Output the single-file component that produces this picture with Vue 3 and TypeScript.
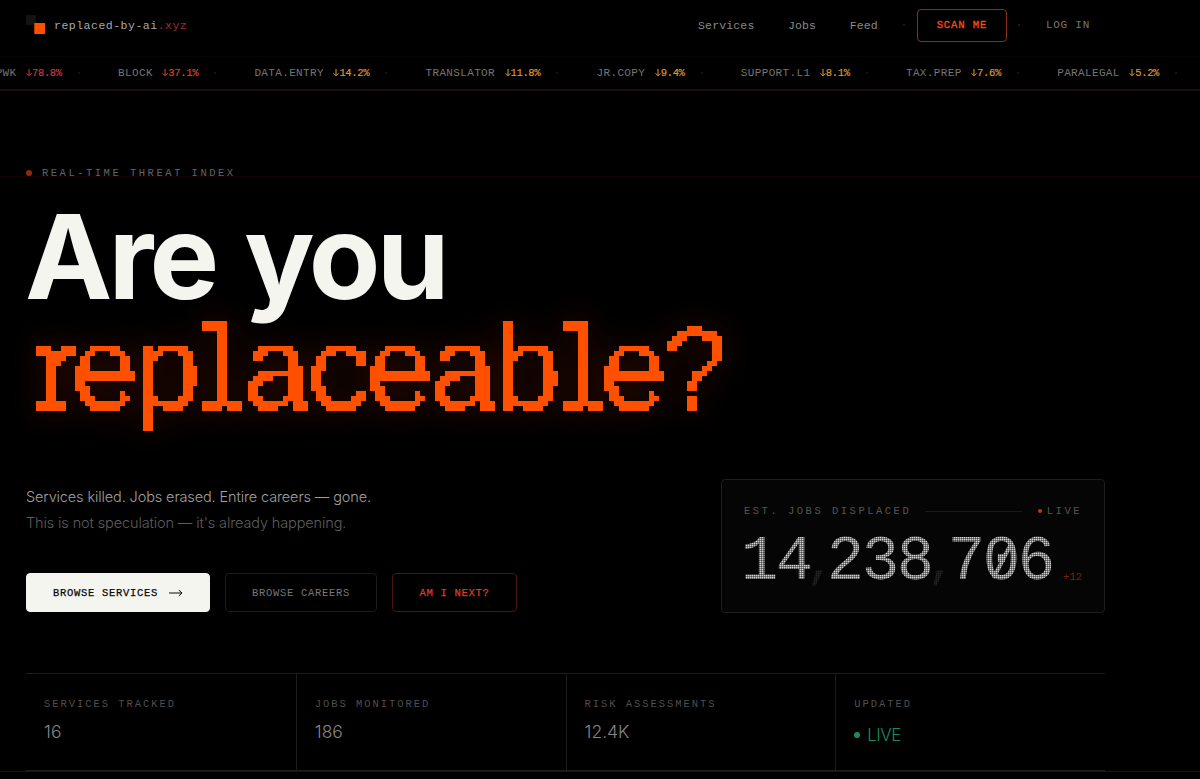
<script setup lang="ts">
interface Tick { name: string; drop: string; tone: string }
interface Stat { label: string; value: string; live?: boolean }

const ticks: Tick[] = [
  { name: 'UPWK', drop: '78.8%', tone: 'red' },
  { name: 'BLOCK', drop: '37.1%', tone: 'orange' },
  { name: 'DATA.ENTRY', drop: '14.2%', tone: 'amber' },
  { name: 'TRANSLATOR', drop: '11.8%', tone: 'amber' },
  { name: 'JR.COPY', drop: '9.4%', tone: 'amber' },
  { name: 'SUPPORT.L1', drop: '8.1%', tone: 'amber' },
  { name: 'TAX.PREP', drop: '7.6%', tone: 'amber' },
  { name: 'PARALEGAL', drop: '5.2%', tone: 'amber' },
]

const stats: Stat[] = [
  { label: 'SERVICES TRACKED', value: '16' },
  { label: 'JOBS MONITORED', value: '186' },
  { label: 'RISK ASSESSMENTS', value: '12.4K' },
  { label: 'UPDATED', value: 'LIVE', live: true },
]

const kerning = [0, 0, 4, -5, -3, 4, 0, 6, 4, -4, -8, 4]
const letters = 'replaceable?'.split('').map((c, i) => ({ c, kern: kerning[i] + 'px' }))
const digits = '14,238,706'.split('')
const kind = (d: string) => (d === ',' ? 'comma' : d === '0' ? 'zero' : 'num')
</script>

<template>
  <div class="page">
    <svg class="defs" width="0" height="0" aria-hidden="true">
      <filter id="pixelate" filterUnits="userSpaceOnUse" x="-20" y="0" width="100" height="150" color-interpolation-filters="sRGB">
        <feFlood x="2" y="2" width="1" height="1" flood-color="#000" result="dot" />
        <feOffset in="dot" dx="0" dy="0" x="0" y="0" width="5" height="5" result="cell" />
        <feTile in="cell" x="-20" y="0" width="100" height="150" result="grid" />
        <feComposite in="SourceGraphic" in2="grid" operator="in" result="samples" />
        <feComponentTransfer in="samples" result="hard">
          <feFuncA type="discrete" tableValues="0 1" />
        </feComponentTransfer>
        <feMorphology in="hard" operator="dilate" radius="2" />
      </filter>
    </svg>

    <header class="nav">
      <div class="brand">
        <svg class="logo" viewBox="0 0 20 20" width="20" height="20"><rect x="0" y="0" width="10" height="10" fill="#111412" /><rect x="8.3" y="8" width="10.7" height="11" fill="#ff5000" /></svg>
        <span>replaced-by-ai<i>.xyz</i></span>
      </div>
      <nav class="links">
        <a class="link">Services</a><a class="link">Jobs</a><a class="link">Feed</a>
        <b class="sep"></b>
        <button class="scan">SCAN ME</button>
        <b class="sep after"></b>
        <a class="login">LOG IN</a>
      </nav>
    </header>

    <div class="ticker">
      <div v-for="t in ticks" :key="t.name" class="tick">
        <span class="tname">{{ t.name }}</span>
        <span class="drop" :class="t.tone"><svg viewBox="0 0 6 8" width="6" height="8"><path d="M3 0v6.6M.5 4.3 3 6.8l2.5-2.5" fill="none" stroke="currentColor" /></svg>{{ t.drop }}</span>
        <b class="tdot"></b>
      </div>
    </div>

    <main class="hero">
      <p class="eyebrow"><b></b>REAL-TIME THREAT INDEX</p>
      <h1>
        <span class="are">Are you</span>
        <span class="glow"><span v-for="(l, i) in letters" :key="i" class="pixel" :class="{ r: l.c === 'r', l: l.c === 'l', p: l.c === 'p' }" :style="{ marginLeft: l.kern }">{{ l.c }}</span></span>
      </h1>
      <div class="row">
        <div class="left">
          <p class="lead">Services killed. Jobs erased. Entire careers — gone.</p>
          <p class="lead dim">This is not speculation — it's already happening.</p>
          <div class="actions">
            <button class="btn primary">BROWSE SERVICES<svg viewBox="0 0 14 8" width="14" height="8"><path d="M0 4h13M9.8 1 13 4 9.8 7" fill="none" stroke="currentColor" /></svg></button>
            <button class="btn ghost">BROWSE CAREERS</button>
            <button class="btn danger">AM I NEXT?</button>
          </div>
        </div>
        <aside class="card">
          <div class="chead"><span>EST. JOBS DISPLACED</span><hr><span class="clive"><b></b>LIVE</span></div>
          <div class="count">
            <div class="digits"><span v-for="(d, i) in digits" :key="i" :class="kind(d)">{{ d }}</span></div>
            <span class="plus">+12</span>
          </div>
        </aside>
      </div>
      <section class="stats">
        <div v-for="s in stats" :key="s.label" class="stat">
          <div class="slabel">{{ s.label }}</div>
          <div class="sval" :class="{ live: s.live }"><b v-if="s.live"></b>{{ s.value }}</div>
        </div>
      </section>
    </main>
    <div class="foot"></div>
    <div class="scan-line"></div>
  </div>
</template>

<style>
body { background: #000; overflow: hidden; }
</style>

<style scoped>
* { box-sizing: border-box; }
.page { position: relative; width: 1200px; height: 779px; overflow: hidden; background: #000; font-family: "Liberation Mono", monospace; color: #888; }
.defs { position: absolute; }
p, h1 { margin: 0; font-weight: 400; }
button { font-family: inherit; background: none; padding: 0; display: flex; align-items: center; justify-content: center; border-radius: 4px; }
.nav { height: 57px; padding: 0 110px 6px 26px; display: flex; align-items: center; justify-content: space-between; border-bottom: 1px solid #050505; }
.brand { display: flex; align-items: center; gap: 8px; font-size: 11.5px; letter-spacing: .5px; color: #a9a9a9; }
.brand i { font-style: normal; color: #a03020; }
.logo { display: block; }
.links { display: flex; align-items: center; font-size: 11.5px; letter-spacing: .15px; color: #888; }
.link { margin-right: 33.5px; }
.sep { width: 2px; height: 2px; background: #222; border-radius: 50%; margin: 0 12px 0 -8.5px; }
.sep.after { margin: 0 26px 0 11px; }
.scan { width: 90px; height: 33px; border: 1px solid #8a2f17; color: #ff4a14; font-size: 10.5px; letter-spacing: .9px; -webkit-text-stroke: .3px currentColor; }
.login { font-size: 11px; letter-spacing: .75px; color: #777; }
.ticker { height: 34px; display: flex; align-items: center; margin-left: -11.3px; width: 1240px; border-bottom: 2px solid #1a0f0b; }
.tick { display: flex; align-items: center; flex: none; height: 32px; font-size: 11px; color: #757575; }
.tname { letter-spacing: .35px; margin-right: 9.5px; }
.drop { display: flex; align-items: center; font-size: 10.5px; letter-spacing: -.35px; -webkit-text-stroke: .15px currentColor; }
.red { color: #d93445; } .orange { color: #dc4a20; } .amber { color: #e39a2a; }
.tdot { width: 2px; height: 2px; border-radius: 50%; background: #1c1c1c; margin: 0 38.3px 0 16px; }
.hero { padding: 74px 95px 0 26px; }
.eyebrow { height: 16px; display: flex; align-items: center; gap: 10px; font-size: 10.5px; letter-spacing: 2.5px; color: #636363; }
.eyebrow b { width: 6px; height: 6px; border-radius: 50%; background: #8e2a12; }
h1 { height: 298px; }
.are { display: block; height: 130px; margin-left: -1px; padding-top: 6px; line-height: 140px; font-family: Inter, sans-serif; font-weight: 700; font-size: 117px; letter-spacing: -3.8px; word-spacing: 5px; color: #f5f5f0; white-space: nowrap; }
.glow { display: flex; height: 150px; margin-left: -10px; filter: drop-shadow(0 0 16px rgba(255, 50, 0, .22)); }
.pixel { position: relative; display: flex; justify-content: center; flex: none; width: 59px; height: 150px; line-height: 134px; font-size: 122px; color: #ff5000; filter: url(#pixelate); }
.r { padding-left: 36px; clip-path: inset(0 -1px 0 0); }
.r::before, .r::after, .l::before { content: ""; position: absolute; height: 10px; background: #ff5000; }
.r::before { left: 20px; top: 35px; width: 15px; }
.r::after { left: 20px; top: 90px; width: 30px; }
.l::before { left: 10px; top: 90px; width: 20px; }
.l { clip-path: inset(0 9px 0 0); }
.p { clip-path: inset(0 0 30px 0); }
.row { display: flex; justify-content: space-between; align-items: flex-start; height: 194px; }
.left { padding-top: 5px; }
.lead { height: 26px; line-height: 26px; font-family: Inter, sans-serif; font-weight: 300; font-size: 14.5px; letter-spacing: -.12px; color: #a0a0a0; }
.dim { color: #5d5d5d; }
.actions { display: flex; gap: 15px; margin-top: 37px; }
.btn { height: 39px; font-size: 10.5px; letter-spacing: .7px; border: 1px solid #1c1c1c; }
.btn svg { margin-left: 11px; }
.primary { width: 184px; background: #f5f5f0; border-color: #f5f5f0; color: #0a0a0a; -webkit-text-stroke: .25px currentColor; }
.ghost { width: 152px; color: #777; }
.danger { width: 125px; border-color: #4d160c; color: #dc3f1d; -webkit-text-stroke: .25px currentColor; }
.card { width: 384px; height: 134px; border: 1px solid #1d1d1d; border-radius: 4px; background: #050505; padding: 22px 22px 0; }
.chead { display: flex; align-items: center; height: 18px; font-size: 10.5px; letter-spacing: 2.5px; color: #555; white-space: nowrap; }
.chead hr { width: 98px; height: 1px; border: 0; background: #191919; margin: 0 16px 0 14px; }
.clive { display: flex; align-items: center; gap: 5px; }
.clive b { width: 4px; height: 4px; border-radius: 50%; background: #c03818; }
.count { display: flex; align-items: flex-end; height: 66px; justify-content: space-between; padding-top: 4px; }
.digits { display: flex; margin-left: -2px; height: 78px; line-height: 78px; font-size: 62.5px; color: #d0d0d0; align-self: flex-start; -webkit-mask-image: repeating-linear-gradient(0deg, #000 0 1px, rgba(0,0,0,.6) 1px 2px), repeating-linear-gradient(90deg, #000 0 1px, rgba(0,0,0,.6) 1px 2px); -webkit-mask-composite: source-in; mask-composite: intersect; }
.digits span { width: 35px; flex: none; display: flex; justify-content: center; }
.digits .comma { width: 16px; color: #262626; font-size: 42px; padding-top: 3px; -webkit-text-stroke: 1px #262626; }
.zero { position: relative; }
.zero::after { content: ""; position: absolute; left: 15.5px; top: 19px; width: 4px; height: 37px; background: currentColor; transform: rotate(27deg); }
.plus { font-size: 10.5px; color: #6d2314; padding-bottom: 3px; }
.stats { display: grid; grid-template-columns: repeat(4, 1fr); height: 98px; border-top: 1px solid #1c1c1c; border-bottom: 1px solid #1c1c1c; }
.stat { padding: 23px 18px; border-left: 1px solid #1c1c1c; }
.stat:first-child { border-left: 0; }
.slabel { height: 14px; line-height: 14px; font-size: 10.5px; letter-spacing: 1.95px; color: #4e4e4e; }
.sval { height: 28px; line-height: 28px; margin-top: 7px; font-family: Inter, sans-serif; font-weight: 300; font-size: 17.5px; color: #858585; letter-spacing: 0; }
.live { display: flex; align-items: center; gap: 7px; color: #1e8a5c; margin-top: 10px; font-size: 17px; letter-spacing: -.5px; }
.live b { width: 6px; height: 6px; border-radius: 50%; background: #1e8a5c; }
.foot { height: 1px; background: #181818; }
.scan-line { position: absolute; left: 0; right: 0; top: 176px; height: 1px; background: #120403; }
</style>
